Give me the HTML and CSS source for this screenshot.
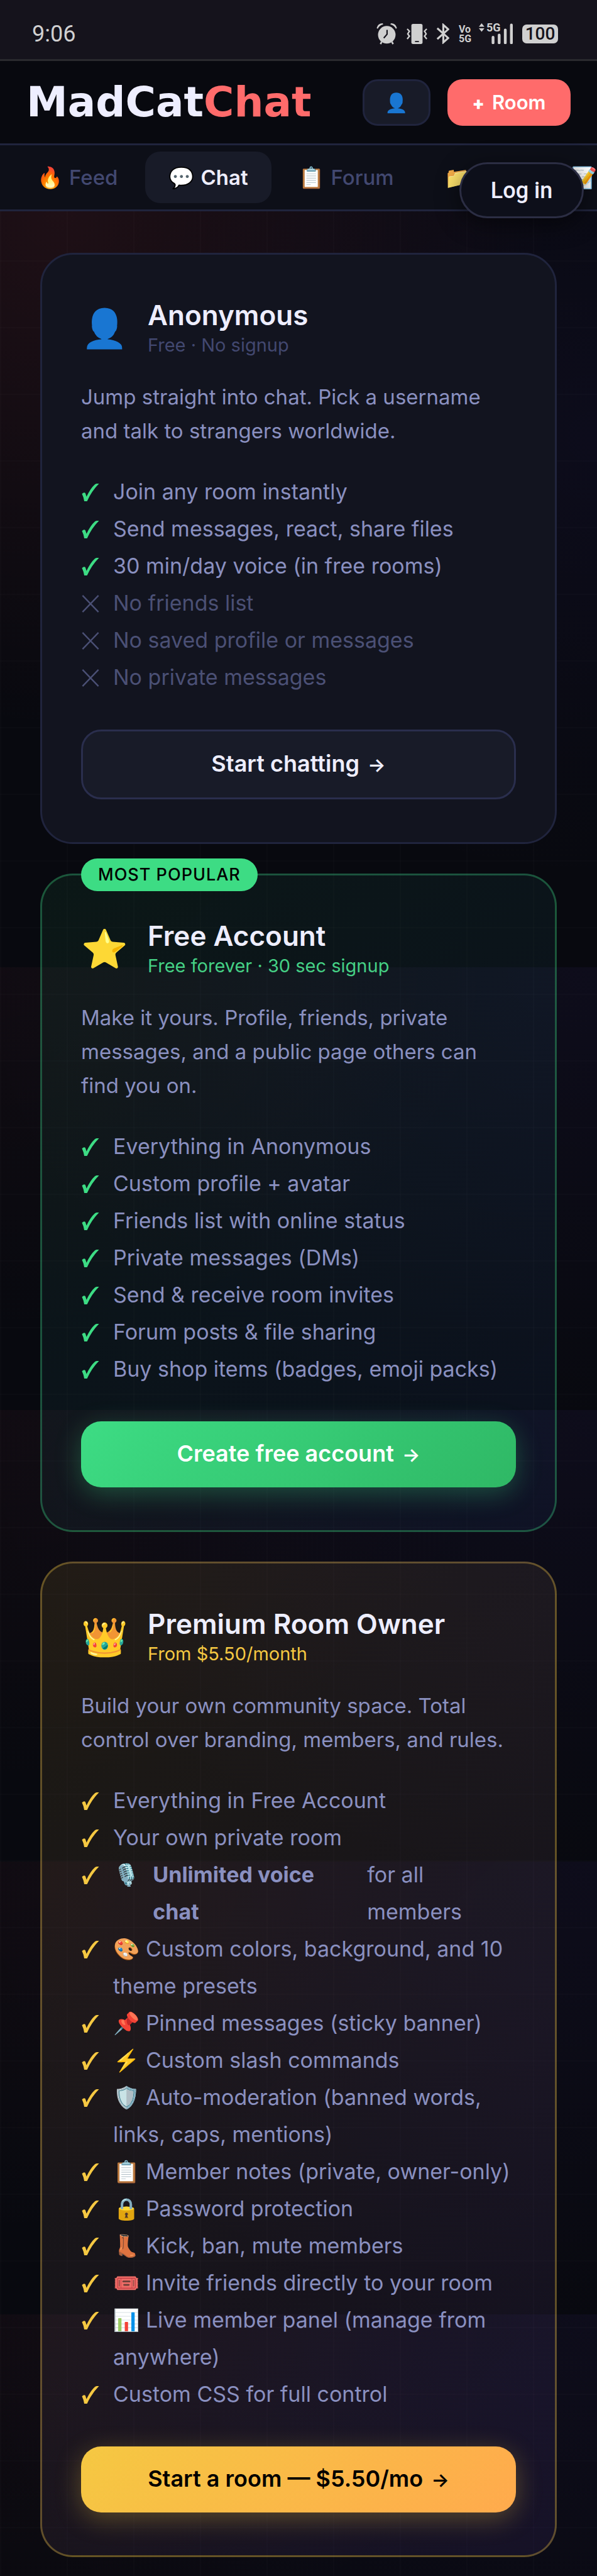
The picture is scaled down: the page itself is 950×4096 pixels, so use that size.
FILE: index.html
```html
<!DOCTYPE html>
<html lang="en">
<head>
<meta charset="utf-8">
<meta name="viewport" content="width=device-width, initial-scale=1">
<title>MadCatChat</title>
<link rel="stylesheet" href="styles.css">
</head>
<body>
<svg class="defs" aria-hidden="true">
  <symbol id="check" viewBox="0 0 30 31"><path d="M0 18Q4 14 6 17Q7 20 8 23Q15 8 23 1Q27 -1 30 0Q17 13 9 31L4 31Q3 24 0 18Z" fill="currentColor"/></symbol>
  <symbol id="cross" viewBox="0 0 30 31"><path d="M1 1L29 30M29 1L1 30" stroke="currentColor" stroke-width="2.6" fill="none"/></symbol>
</svg>

<div class="status">
  <span class="time">9:06</span>
  <div class="status-icons">
    <svg width="33" height="34" viewBox="0 0 37 39"><g fill="#d0d0d0"><circle cx="18.500" cy="21" r="16"/><path d="M0 9Q2 0 11 0L12 2Q5 4 2 10ZM37 9Q35 0 26 0L25 2Q32 4 35 10Z"/></g><path d="M9 34L7 38M28 34L30 38" stroke="#d0d0d0" stroke-width="3"/><path d="M19 12V20L13 27" stroke="#15131c" stroke-width="2.500" fill="none"/></svg>
    <svg width="33" height="32" viewBox="0 0 37 36"><rect x="8.500" width="20" height="36" rx="3" fill="#d0d0d0"/><path d="M15 31.500H22" stroke="#15131c" stroke-width="2"/><path d="M1 9L5 13L2 18L5 22L1 27M36 9L32 13L35 18L32 22L36 27" stroke="#d0d0d0" stroke-width="2.600" fill="none"/></svg>
    <svg width="20" height="33" viewBox="0 0 23 38"><path d="M1 9L21 27L12 35V3L21 11L1 29" stroke="#d0d0d0" stroke-width="3.600" fill="none"/></svg>
    <span class="volte"><span>Vo</span><span>5G</span></span>
    <span class="signal">
      <svg width="54" height="33" viewBox="0 0 61 37"><path d="M0 6L5 0L10 6ZM0 9L5 15L10 9Z" fill="#d0d0d0"/><path d="M25.500 25V35M36.500 21V35M47.500 12V35M58.500 3V35" stroke="#d0d0d0" stroke-width="5" stroke-linecap="round"/></svg>
      <span class="net">5G</span>
    </span>
    <span class="battery">100</span>
  </div>
</div>

<header class="top">
  <a class="logo" href="#">MadCat<span>Chat</span></a>
  <div class="top-actions">
    <button class="btn-user" type="button" aria-label="Profile">👤</button>
    <button class="btn-room" type="button"><b>+</b>Room</button>
  </div>
</header>

<div class="nav-wrap">
  <nav class="tabs">
    <a href="#"><i>🔥</i>Feed</a>
    <a href="#" class="active"><i>💬</i>Chat</a>
    <a href="#"><i>📋</i>Forum</a>
    <a href="#" class="files" aria-label="Files"><i>📁</i></a>
    <a href="#" aria-label="Notes"><i>📝</i></a>
  </nav>
  <button class="login" type="button">Log in</button>
</div>

<main class="plans">
  <section class="card">
    <div class="card-head">
      <span class="emoji">👤</span>
      <div><h2>Anonymous</h2><p class="sub">Free · No signup</p></div>
    </div>
    <p class="desc">Jump straight into chat. Pick a username and talk to strangers worldwide.</p>
    <ul>
      <li><svg><use href="#check"/></svg>Join any room instantly</li>
      <li><svg><use href="#check"/></svg>Send messages, react, share files</li>
      <li><svg><use href="#check"/></svg>30 min/day voice (in free rooms)</li>
      <li class="off"><svg><use href="#cross"/></svg>No friends list</li>
      <li class="off"><svg><use href="#cross"/></svg>No saved profile or messages</li>
      <li class="off"><svg><use href="#cross"/></svg>No private messages</li>
    </ul>
    <button class="cta outline" type="button">Start chatting <span>→</span></button>
  </section>

  <section class="card free">
    <span class="badge">MOST POPULAR</span>
    <div class="card-head">
      <span class="emoji">⭐</span>
      <div><h2>Free Account</h2><p class="sub">Free forever · 30 sec signup</p></div>
    </div>
    <p class="desc">Make it yours. Profile, friends, private messages, and a public page others can find you on.</p>
    <ul>
      <li><svg><use href="#check"/></svg>Everything in Anonymous</li>
      <li><svg><use href="#check"/></svg>Custom profile + avatar</li>
      <li><svg><use href="#check"/></svg>Friends list with online status</li>
      <li><svg><use href="#check"/></svg>Private messages (DMs)</li>
      <li><svg><use href="#check"/></svg>Send &amp; receive room invites</li>
      <li><svg><use href="#check"/></svg>Forum posts &amp; file sharing</li>
      <li><svg><use href="#check"/></svg>Buy shop items (badges, emoji packs)</li>
    </ul>
    <button class="cta green" type="button">Create free account <span>→</span></button>
  </section>

  <section class="card premium">
    <div class="card-head">
      <span class="emoji">👑</span>
      <div><h2>Premium Room Owner</h2><p class="sub">From $5.50/month</p></div>
    </div>
    <p class="desc">Build your own community space. Total control over branding, members, and rules.</p>
    <ul>
      <li><svg><use href="#check"/></svg>Everything in Free Account</li>
      <li><svg><use href="#check"/></svg>Your own private room</li>
      <li><svg><use href="#check"/></svg>🎙️ <strong>Unlimited voice chat</strong> for all members</li>
      <li><svg><use href="#check"/></svg>🎨 Custom colors, background, and 10 theme presets</li>
      <li><svg><use href="#check"/></svg>📌 Pinned messages (sticky banner)</li>
      <li><svg><use href="#check"/></svg>⚡ Custom slash commands</li>
      <li><svg><use href="#check"/></svg>🛡️ Auto-moderation (banned words, links, caps, mentions)</li>
      <li><svg><use href="#check"/></svg>📋 Member notes (private, owner-only)</li>
      <li><svg><use href="#check"/></svg>🔒 Password protection</li>
      <li><svg><use href="#check"/></svg>👢 Kick, ban, mute members</li>
      <li><svg><use href="#check"/></svg>🎟️ Invite friends directly to your room</li>
      <li><svg><use href="#check"/></svg>📊 Live member panel (manage from anywhere)</li>
      <li><svg><use href="#check"/></svg>Custom CSS for full control</li>
    </ul>
    <button class="cta gold" type="button">Start a room — $5.50/mo <span>→</span></button>
  </section>
</main>
</body>
</html>
```

FILE: styles.css
```css
:root {
  --bg: #08090f;
  --line: #20243d;
  --text: #eeeeff;
  --muted: #8a90c0;
  --dim: #424870;
  --green: #3ddc84;
  --gold: #f5c842;
  --red-glow: radial-gradient(ellipse at 0 0, rgba(255, 80, 90, 0.035), transparent 60%);
  --violet-glow: radial-gradient(ellipse at 100% 0, rgba(125, 80, 255, 0.05), transparent 75%);
}

* { box-sizing: border-box; }

body {
  margin: 0;
  background: var(--bg);
  color: var(--text);
  font-family: Inter, "Noto Color Emoji", sans-serif;
  font-size: 33px;
}

h2, p, ul { margin: 0; padding: 0; }
button { font-family: inherit; cursor: pointer; }
a { text-decoration: none; }
.defs { position: absolute; width: 0; height: 0; }

.status {
  display: flex;
  align-items: center;
  justify-content: space-between;
  height: 97px;
  padding: 13px 62px 0 51px;
  background: #15131c;
  border-bottom: 3px solid #2a2a2e;
  color: #d0d0d0;
  font-family: Roboto, sans-serif;
}
.time { font-size: 36px; }
.status-icons { display: flex; align-items: center; gap: 15px; }
.volte { display: flex; flex-direction: column; width: 17px; font-size: 16px; line-height: 15px; font-weight: 700; }
.signal { position: relative; display: flex; }
.net { position: absolute; left: 12px; top: -3px; font-size: 18px; line-height: 20px; font-weight: 700; }
.battery {
  width: 57px;
  height: 30px;
  border-radius: 7px;
  background: #d0d0d0;
  color: #15131c;
  font-size: 28px;
  line-height: 30px;
  font-weight: 500;
  text-align: center;
}

.top {
  display: flex;
  align-items: center;
  justify-content: space-between;
  height: 134px;
  padding: 0 42px;
  border-bottom: 3px solid var(--line);
}
.logo { color: var(--text); font-family: "DejaVu Sans", sans-serif; font-size: 66px; font-weight: 700; line-height: 72px; }
.logo span { color: #ff6b6b; }
.top-actions { display: flex; gap: 27px; }
.btn-user, .btn-room { height: 74px; border-radius: 24px; }
.btn-user { width: 108px; padding: 0; background: #181b28; border: 3px solid var(--line); font-size: 30px; }
.btn-room { width: 196px; padding: 0; background: #ff6b6b; border: 0; color: #fff; font-size: 31px; font-weight: 600; }
.btn-room b { margin-right: 12px; font-size: 28px; }

.nav-wrap { position: relative; }
.tabs {
  display: flex;
  align-items: center;
  gap: 7px;
  height: 105px;
  padding: 0 22px;
  overflow: hidden;
  background: #0d0f18;
  border-bottom: 3px solid var(--line);
}
.tabs a {
  display: flex;
  flex: none;
  align-items: center;
  gap: 10px;
  height: 82px;
  padding: 0 37px;
  border-radius: 24px;
  color: var(--dim);
  font-size: 33px;
  font-weight: 500;
}
.tabs i { width: 41px; font-style: normal; }
.tabs .active { background: #181b28; color: var(--text); font-weight: 600; }
.tabs .files { width: 195px; }
.login {
  position: absolute;
  top: 27px;
  right: 21px;
  width: 198px;
  height: 89px;
  border: 3px solid #2b2d43;
  border-radius: 45px;
  background: #0d0f1a;
  color: var(--text);
  box-shadow: 0 8px 36px rgba(0, 0, 0, 0.5);
  font-family: Roboto, sans-serif;
  font-size: 36px;
  font-weight: 500;
}

.plans {
  display: flex;
  flex-direction: column;
  gap: 47px;
  padding: 66px 64px 30px;
  background:
    linear-gradient(rgba(255, 255, 255, 0.012) 2px, transparent 2px) 0 -28px / 106px 106px,
    linear-gradient(90deg, rgba(255, 255, 255, 0.012) 2px, transparent 2px) 0 0 / 106px 106px,
    radial-gradient(ellipse at 10% 0, rgba(255, 80, 90, 0.09), transparent 65%) 0 0 / 100% 900px no-repeat,
    radial-gradient(ellipse at 100% 30%, rgba(100, 70, 255, 0.05), transparent 60%) 0 0 / 100% 1200px no-repeat,
    var(--red-glow) 0 1202px / 100% 700px no-repeat,
    var(--violet-glow) 0 1202px / 100% 700px no-repeat,
    var(--red-glow) 0 1906px / 100% 718px no-repeat,
    var(--violet-glow) 0 1906px / 100% 718px no-repeat,
    var(--red-glow) 0 2624px / 100% 718px no-repeat,
    var(--violet-glow) 0 2624px / 100% 718px no-repeat,
    var(--red-glow) 0 3344px / 100% 718px no-repeat,
    var(--violet-glow) 0 3344px / 100% 718px no-repeat,
    var(--bg);
}

.card {
  position: relative;
  padding: 68px 62px;
  border: 3px solid var(--line);
  border-radius: 52px;
  background: #12141f;
}
.free {
  border-color: rgba(61, 220, 132, 0.33);
  background: linear-gradient(135deg, rgba(61, 220, 132, 0.07), rgba(60, 130, 255, 0.06));
}
.premium {
  border-color: rgba(245, 200, 66, 0.33);
  background: linear-gradient(135deg, rgba(245, 200, 66, 0.09), rgba(150, 100, 255, 0.08));
}

.badge {
  position: absolute;
  top: -27px;
  left: 62px;
  padding: 0 27px;
  border-radius: 26px;
  background: var(--green);
  color: #000;
  font-size: 27px;
  font-weight: 500;
  letter-spacing: 1px;
  line-height: 52px;
}

.card-head { display: flex; align-items: center; gap: 31px; height: 96px; margin-bottom: 35px; }
.emoji { width: 75px; font-size: 60px; line-height: 86px; }
h2 { font-size: 44px; font-weight: 600; line-height: 56px; }
.sub { color: var(--dim); font-size: 29px; line-height: 40px; }
.free .sub { color: #45d085; }
.premium .sub { color: var(--gold); }

.desc { margin-bottom: 40px; color: var(--muted); font-size: 33px; line-height: 54px; }

ul { margin-bottom: 54px; list-style: none; }
li { display: flex; gap: 21px; color: var(--muted); font-size: 34px; line-height: 59px; }
li svg { flex: none; width: 30px; height: 28px; margin-top: 17px; color: var(--green); }
.premium li svg { color: var(--gold); }
li.off, li.off svg { color: #4b5075; }

.cta { display: block; width: 100%; padding: 0; border: 0; border-radius: 32px; color: #fff; font-size: 36px; font-weight: 600; line-height: 103px; }
.cta span { margin-left: 4px; font-size: 30px; }
.outline { border: 3px solid #2a2e4d; background: #181b28; color: var(--text); }
.green { background: linear-gradient(135deg, #3ddc84, #2fb865); box-shadow: 0 10px 42px rgba(61, 220, 132, 0.3); }
.gold { background: linear-gradient(135deg, #f5c842, #ffaa4d); color: #000; box-shadow: 0 10px 42px rgba(245, 200, 66, 0.3); }
```
